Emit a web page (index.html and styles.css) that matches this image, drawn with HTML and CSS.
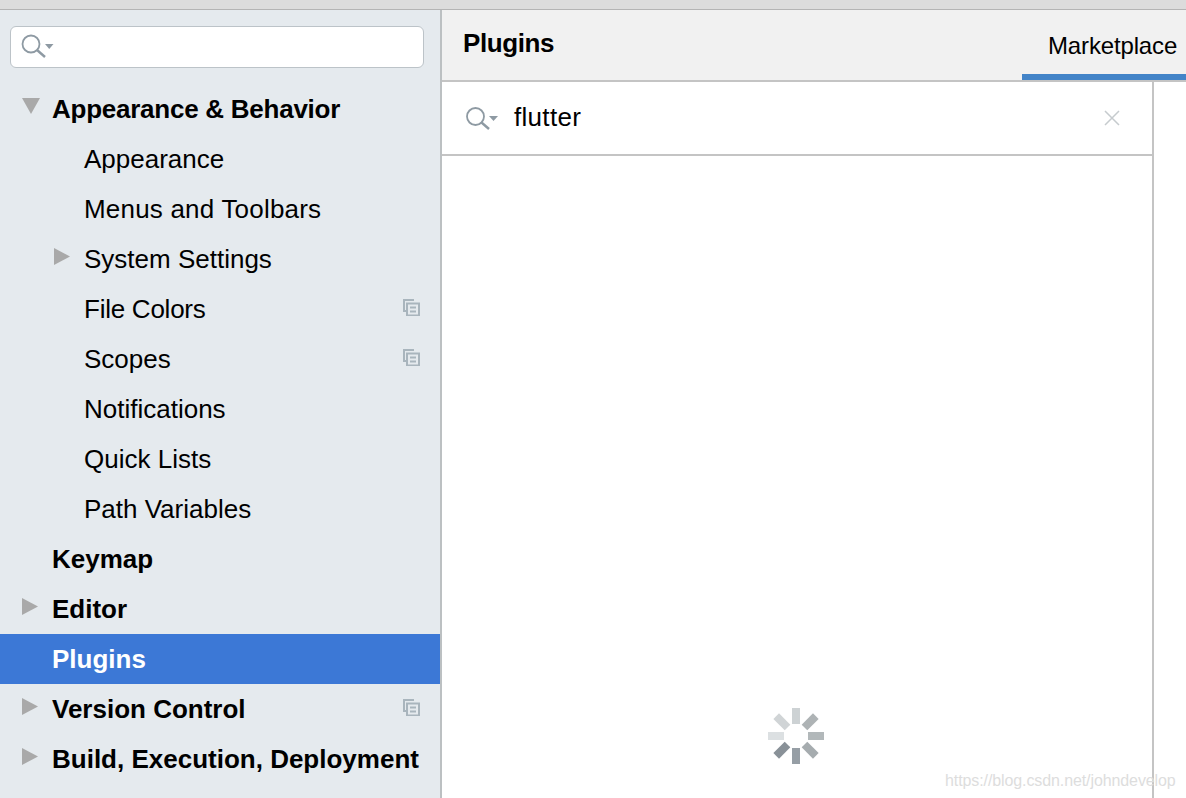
FILE: index.html
```html
<!DOCTYPE html>
<html lang="en">
<head>
<meta charset="utf-8">
<title>Plugins</title>
<link rel="stylesheet" href="styles.css">
</head>
<body>
<div class="topbar"></div>
<div class="main">
  <aside class="sidebar">
    <div class="side-search">
      <svg class="search-icon" width="34" height="32" viewBox="0 0 34 32"><circle cx="10" cy="13" r="8.500" fill="none" stroke="#8e9aa3" stroke-width="1.800"/><path d="M16 19L24 26" stroke="#8e9aa3" stroke-width="2.400" fill="none"/><path d="M24 13h8.500l-4.250 5z" fill="#8e9aa3"/></svg>
    </div>
    <ul class="tree">
      <li class="row bold tight"><svg class="arrow" width="20" height="20" viewBox="0 0 20 20"><path d="M1 1h18l-9 16z" fill="#a9a9a9"/></svg><span>Appearance &amp; Behavior</span></li>
      <li class="row sub"><span>Appearance</span></li>
      <li class="row sub wide"><span>Menus and Toolbars</span></li>
      <li class="row sub"><svg class="arrow" width="18" height="20" viewBox="0 0 18 20"><path d="M1 1l16 8.500L1 18z" fill="#a9a9a9"/></svg><span>System Settings</span></li>
      <li class="row sub tight"><span>File Colors</span><svg class="copy" width="18" height="18" viewBox="0 0 18 18"><use href="#copy-icon"/></svg></li>
      <li class="row sub"><span>Scopes</span><svg class="copy" width="18" height="18" viewBox="0 0 18 18"><use href="#copy-icon"/></svg></li>
      <li class="row sub"><span>Notifications</span></li>
      <li class="row sub"><span>Quick Lists</span></li>
      <li class="row sub"><span>Path Variables</span></li>
      <li class="row bold"><span>Keymap</span></li>
      <li class="row bold"><svg class="arrow" width="18" height="20" viewBox="0 0 18 20"><path d="M1 1l16 8.500L1 18z" fill="#a9a9a9"/></svg><span>Editor</span></li>
      <li class="row bold selected"><span>Plugins</span></li>
      <li class="row bold"><svg class="arrow" width="18" height="20" viewBox="0 0 18 20"><path d="M1 1l16 8.500L1 18z" fill="#a9a9a9"/></svg><span>Version Control</span><svg class="copy" width="18" height="18" viewBox="0 0 18 18"><use href="#copy-icon"/></svg></li>
      <li class="row bold"><svg class="arrow" width="18" height="20" viewBox="0 0 18 20"><path d="M1 1l16 8.500L1 18z" fill="#a9a9a9"/></svg><span>Build, Execution, Deployment</span></li>
    </ul>
  </aside>
  <section class="content">
    <header class="head">
      <h1 class="title">Plugins</h1>
      <div class="tab">Marketplace</div>
    </header>
    <div class="body">
      <div class="panel">
        <div class="plugin-search">
          <svg class="search-icon" width="34" height="30" viewBox="0 0 34 30"><circle cx="9.500" cy="13.500" r="8.500" fill="none" stroke="#8e9aa3" stroke-width="1.800"/><path d="M15.500 19.500L23 26" stroke="#8e9aa3" stroke-width="2.400" fill="none"/><path d="M23 13h9l-4.500 5z" fill="#8e9aa3"/></svg>
          <span class="query">flutter</span>
          <svg class="clear" width="16" height="16" viewBox="0 0 16 16"><path d="M1 1l14 14M15 1L1 15" stroke="#c6cbce" stroke-width="1.500" fill="none"/></svg>
        </div>
        <div class="results">
          <svg class="spinner" width="56" height="56" viewBox="0 0 56 56">
            <rect x="24" y="0" width="8" height="16" fill="#cdd2d4"/>
            <rect x="24" y="0" width="8" height="16" fill="#aeb3b5" transform="rotate(45 28 28)"/>
            <rect x="24" y="0" width="8" height="16" fill="#b2b8ba" transform="rotate(90 28 28)"/>
            <rect x="24" y="0" width="8" height="16" fill="#a6acaf" transform="rotate(135 28 28)"/>
            <rect x="24" y="0" width="8" height="16" fill="#969ea5" transform="rotate(180 28 28)"/>
            <rect x="24" y="0" width="8" height="16" fill="#899198" transform="rotate(225 28 28)"/>
            <rect x="24" y="0" width="8" height="16" fill="#dce0e2" transform="rotate(270 28 28)"/>
            <rect x="24" y="0" width="8" height="16" fill="#d0d4d6" transform="rotate(315 28 28)"/>
          </svg>
        </div>
      </div>
      <div class="rest"></div>
    </div>
  </section>
</div>
<div class="watermark">https://blog.csdn.net/johndevelop</div>
<svg class="defs" width="0" height="0"><defs><g id="copy-icon" fill="none" stroke="#a9b5bd" stroke-width="2"><path d="M12 2H2v11h3"/><rect x="5" y="5.500" width="12" height="12"/><path d="M8 9.500h6M8 13.500h6"/></g></defs></svg>
</body>
</html>
```
FILE: styles.css
```css
* { box-sizing: border-box; }
html, body { margin: 0; height: 100%; overflow: hidden; }
body { width: 1186px; height: 798px; position: relative; background: #fff; font-family: "Liberation Sans", Arial, sans-serif; color: #000; display: flex; flex-direction: column; }
.topbar { height: 10px; flex: none; background: #dcdcdc; border-bottom: 1px solid #b4b4b4; }
.main { flex: 1; display: flex; min-height: 0; }
.sidebar { width: 442px; flex: none; background: #e5eaee; border-right: 2px solid #bcc0c2; padding-top: 16px; }
.side-search { margin: 0 16px 0 10px; height: 42px; background: #fff; border: 1px solid #bcc3c8; border-radius: 6px; display: flex; align-items: center; padding-left: 10px; }
.tree { list-style: none; margin: 16px 0 0; padding: 0; }
.row { height: 50px; position: relative; display: flex; align-items: center; padding-left: 52px; font-size: 26px; }
.row.sub { padding-left: 84px; }
.row.bold { font-weight: 700; }
.row.tight { letter-spacing: -0.25px; }
.row.wide { letter-spacing: 0.2px; }
.row.selected { background: #3c78d6; color: #fff; }
.arrow { position: absolute; left: 21px; top: 13px; }
.sub .arrow { left: 53px; }
.copy { position: absolute; left: 402px; top: 14px; }
.content { flex: 1; display: flex; flex-direction: column; min-width: 0; }
.head { height: 72px; flex: none; background: #f1f1f1; border-bottom: 2px solid #c4c4c4; display: flex; justify-content: space-between; padding-left: 21px; }
.title { margin: 16px 0 0; font-size: 26px; font-weight: 700; line-height: 34px; letter-spacing: -0.4px; }
.tab { width: 164px; height: 70px; padding: 21px 0 0 26px; font-size: 24px; line-height: 30px; letter-spacing: -0.15px; border-bottom: 6px solid #4384c8; white-space: nowrap; }
.body { flex: 1; display: flex; min-height: 0; }
.panel { width: 712px; flex: none; border-right: 2px solid #c4c4c4; display: flex; flex-direction: column; }
.plugin-search { height: 74px; flex: none; border-bottom: 2px solid #c4c4c4; display: flex; align-items: center; padding: 0 32px 0 24px; font-size: 26px; }
.query { margin: 0 0 2px 14px; flex: 1; letter-spacing: 0.3px; }
.results { flex: 1; position: relative; }
.spinner { position: absolute; left: 326px; top: 552px; }
.rest { flex: 1; }
.watermark { position: absolute; left: 945px; top: 771px; font-size: 16px; line-height: 20px; letter-spacing: -0.1px; color: #dddddd; white-space: nowrap; }
.defs { position: absolute; }
```
